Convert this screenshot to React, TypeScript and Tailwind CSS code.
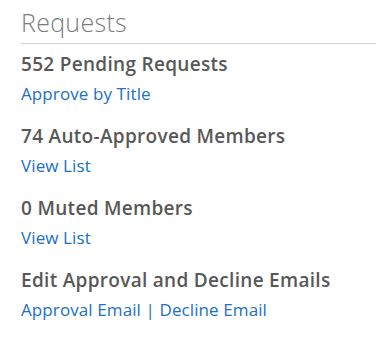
export default function App() {
  const sections = [
    { title: "552 Pending Requests", links: ["Approve by Title"] },
    { title: "74 Auto-Approved Members", links: ["View List"] },
    { title: "0 Muted Members", links: ["View List"] },
    {
      title: "Edit Approval and Decline Emails",
      links: ["Approval Email", "Decline Email"],
    },
  ];

  return (
    <div className="w-[376px] h-[340px] bg-white pl-[21px] pt-[6px] font-['Open_Sans',sans-serif]">
      <h2 className="text-[25px] leading-[32px] font-light tracking-[0.3px] text-[#7c7c7c] pb-[5px] border-b border-[#cfcfcf]">
        Requests
      </h2>
      <div className="flex flex-col gap-[14px] pt-[6px]">
        {sections.map((s) => (
          <div key={s.title}>
            <h3 className="text-[19px] leading-[29px] font-semibold tracking-[0.3px] text-[#585858]">
              {s.title}
            </h3>
            <div className="text-[17px] leading-[29px] tracking-[0.1px] text-[#2070c5]">
              {s.links.map((l, i) => (
                <span key={l}>
                  {i > 0 && <span> | </span>}
                  <a href="#">{l}</a>
                </span>
              ))}
            </div>
          </div>
        ))}
      </div>
    </div>
  );
}
